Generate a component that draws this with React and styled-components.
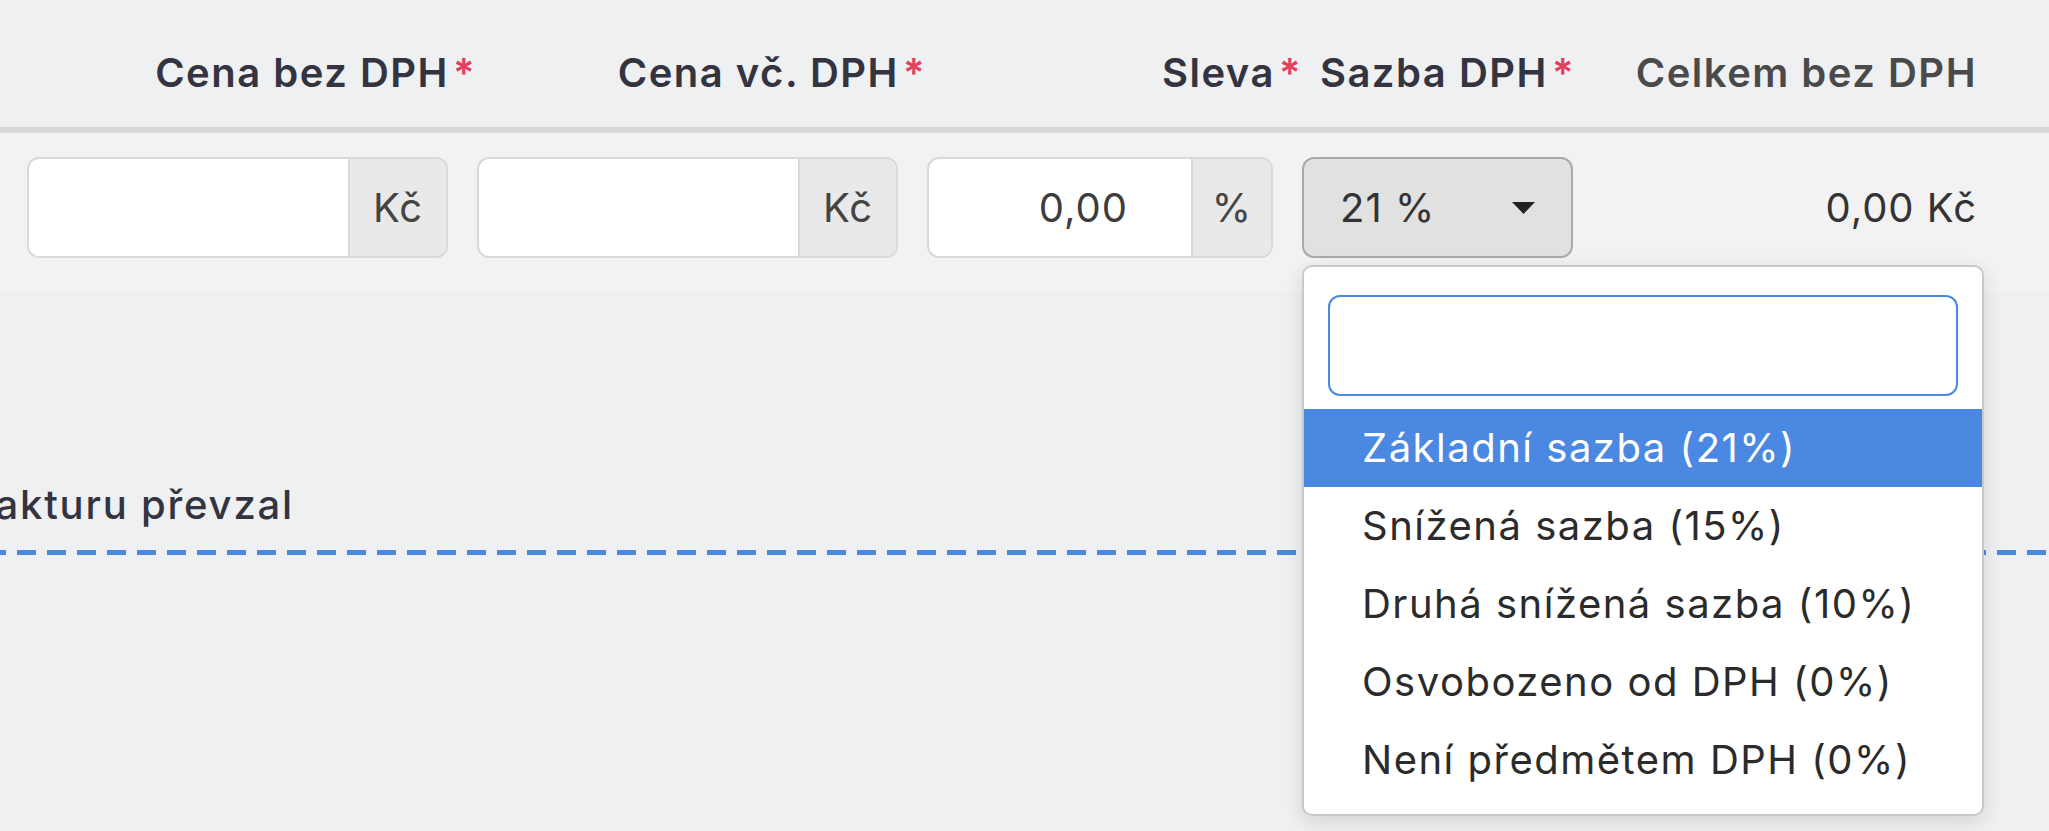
import React from "react";
import styled, { createGlobalStyle } from "styled-components";

const GlobalStyle = createGlobalStyle`
  html, body {
    margin: 0;
    padding: 0;
  }
  body {
    background: #eff0f2;
    font-family: Inter, "Noto Sans", sans-serif;
    overflow: hidden;
  }
  * {
    box-sizing: border-box;
  }
`;

const Page = styled.div`
  width: 2049px;
  height: 831px;
  overflow: hidden;
  background: #eff0f2;
`;

const Grid = styled.div`
  display: grid;
  grid-template-columns: 421px 421px 346px 271px 375px;
  column-gap: 29px;
  padding-left: 27px;
`;

const HeaderRow = styled(Grid)`
  height: 133px;
  padding-top: 53px;
  border-bottom: 6px solid #d7d7d7;
  background: #eff0f2;
`;

const HeaderCell = styled.div`
  display: flex;
  justify-content: flex-end;
  margin-right: ${(p) => (p.$overhang ? `-${p.$overhang}px` : "0")};
  font-size: 40px;
  line-height: 40px;
  font-weight: 600;
  letter-spacing: 1.5px;
  color: ${(p) => (p.$muted ? "#4a4a4a" : "#33343f")};
  white-space: nowrap;
`;

const Required = styled.span`
  color: #e4405e;
  margin-left: 4px;
`;

const ItemRow = styled(Grid)`
  background: #f2f2f2;
  padding-top: 24px;
  padding-bottom: 34px;
  align-items: center;
`;

const InputGroup = styled.div`
  display: flex;
  height: 101px;
  border: 2px solid #d9d9d9;
  border-radius: 12px;
  overflow: hidden;
  background: #fff;
`;

const Field = styled.div`
  flex: 1;
  display: flex;
  align-items: center;
  justify-content: flex-end;
  padding-right: 63px;
  font-size: 40px;
  line-height: 40px;
  letter-spacing: 1px;
  color: #3d3d3d;
`;

const Addon = styled.div`
  flex: none;
  width: ${(p) => p.$width}px;
  display: flex;
  align-items: center;
  justify-content: center;
  background: #e9e9e9;
  border-left: 2px solid #d9d9d9;
  font-size: 40px;
  line-height: 40px;
  letter-spacing: 1px;
  color: #444;
`;

const SelectWrap = styled.div`
  position: relative;
`;

const SelectBox = styled.div`
  height: 101px;
  display: flex;
  align-items: center;
  justify-content: space-between;
  padding: 0 36px;
  border: 2px solid #a9a9a9;
  border-radius: 12px;
  background: #e1e1e1;
  font-size: 40px;
  line-height: 40px;
  letter-spacing: 1px;
  color: #333;
`;

const Total = styled.div`
  text-align: right;
  font-size: 40px;
  line-height: 40px;
  letter-spacing: 1px;
  color: #333;
`;

const Dropdown = styled.div`
  position: absolute;
  top: calc(100% + 7px);
  left: 0;
  z-index: 10;
  width: 682px;
  padding: 28px 0 15px;
  background: #fff;
  border: 2px solid #c9c9c9;
  border-radius: 10px;
  box-shadow: 0 6px 20px rgba(0, 0, 0, 0.12);
`;

const Search = styled.input`
  display: block;
  width: calc(100% - 48px);
  height: 101px;
  margin: 0 24px 13px;
  border: 2px solid #4a88e2;
  border-radius: 12px;
  outline: none;
  background: #fff;
`;

const Option = styled.div`
  height: 78px;
  display: flex;
  align-items: center;
  padding-left: 58px;
  font-size: 40px;
  line-height: 40px;
  letter-spacing: 1.5px;
  white-space: nowrap;
  color: ${(p) => (p.$active ? "#fff" : "#2b2b2b")};
  background: ${(p) => (p.$active ? "#4a88e2" : "transparent")};
`;

const Signature = styled.div`
  padding-top: 193px;
`;

const SignLabel = styled.div`
  margin-left: -29px;
  font-size: 40px;
  line-height: 40px;
  font-weight: 500;
  letter-spacing: 1.8px;
  color: #33343f;
`;

const DashedLine = styled.div`
  margin-top: 25px;
  height: 5px;
  background-image: linear-gradient(to right, #4a88e2 19px, transparent 19px);
  background-size: 30px 5px;
  background-position: 17px 0;
`;

const Caret = () => (
  <svg width="23" height="12" viewBox="0 0 23 12">
    <polygon points="0,0 23,0 11.5,12" fill="#222" />
  </svg>
);

const rates = [
  "Základní sazba (21%)",
  "Snížená sazba (15%)",
  "Druhá snížená sazba (10%)",
  "Osvobozeno od DPH (0%)",
  "Není předmětem DPH (0%)",
];

const App = () => {
  return (
    <Page>
      <GlobalStyle />
      <HeaderRow>
        <HeaderCell $overhang={28}>
          Cena bez DPH<Required>*</Required>
        </HeaderCell>
        <HeaderCell $overhang={28}>
          Cena vč. DPH<Required>*</Required>
        </HeaderCell>
        <HeaderCell $overhang={29}>
          Sleva<Required>*</Required>
        </HeaderCell>
        <HeaderCell $overhang={2}>
          Sazba DPH<Required>*</Required>
        </HeaderCell>
        <HeaderCell $muted>Celkem bez DPH</HeaderCell>
      </HeaderRow>

      <ItemRow>
        <InputGroup>
          <Field />
          <Addon $width={98}>Kč</Addon>
        </InputGroup>
        <InputGroup>
          <Field />
          <Addon $width={98}>Kč</Addon>
        </InputGroup>
        <InputGroup>
          <Field>0,00</Field>
          <Addon $width={80}>%</Addon>
        </InputGroup>
        <SelectWrap>
          <SelectBox>
            <span>21 %</span>
            <Caret />
          </SelectBox>
          <Dropdown>
            <Search />
            {rates.map((rate, i) => (
              <Option key={rate} $active={i === 0}>
                {rate}
              </Option>
            ))}
          </Dropdown>
        </SelectWrap>
        <Total>0,00 Kč</Total>
      </ItemRow>

      <Signature>
        <SignLabel>Fakturu převzal</SignLabel>
        <DashedLine />
      </Signature>
    </Page>
  );
};

export default App;
